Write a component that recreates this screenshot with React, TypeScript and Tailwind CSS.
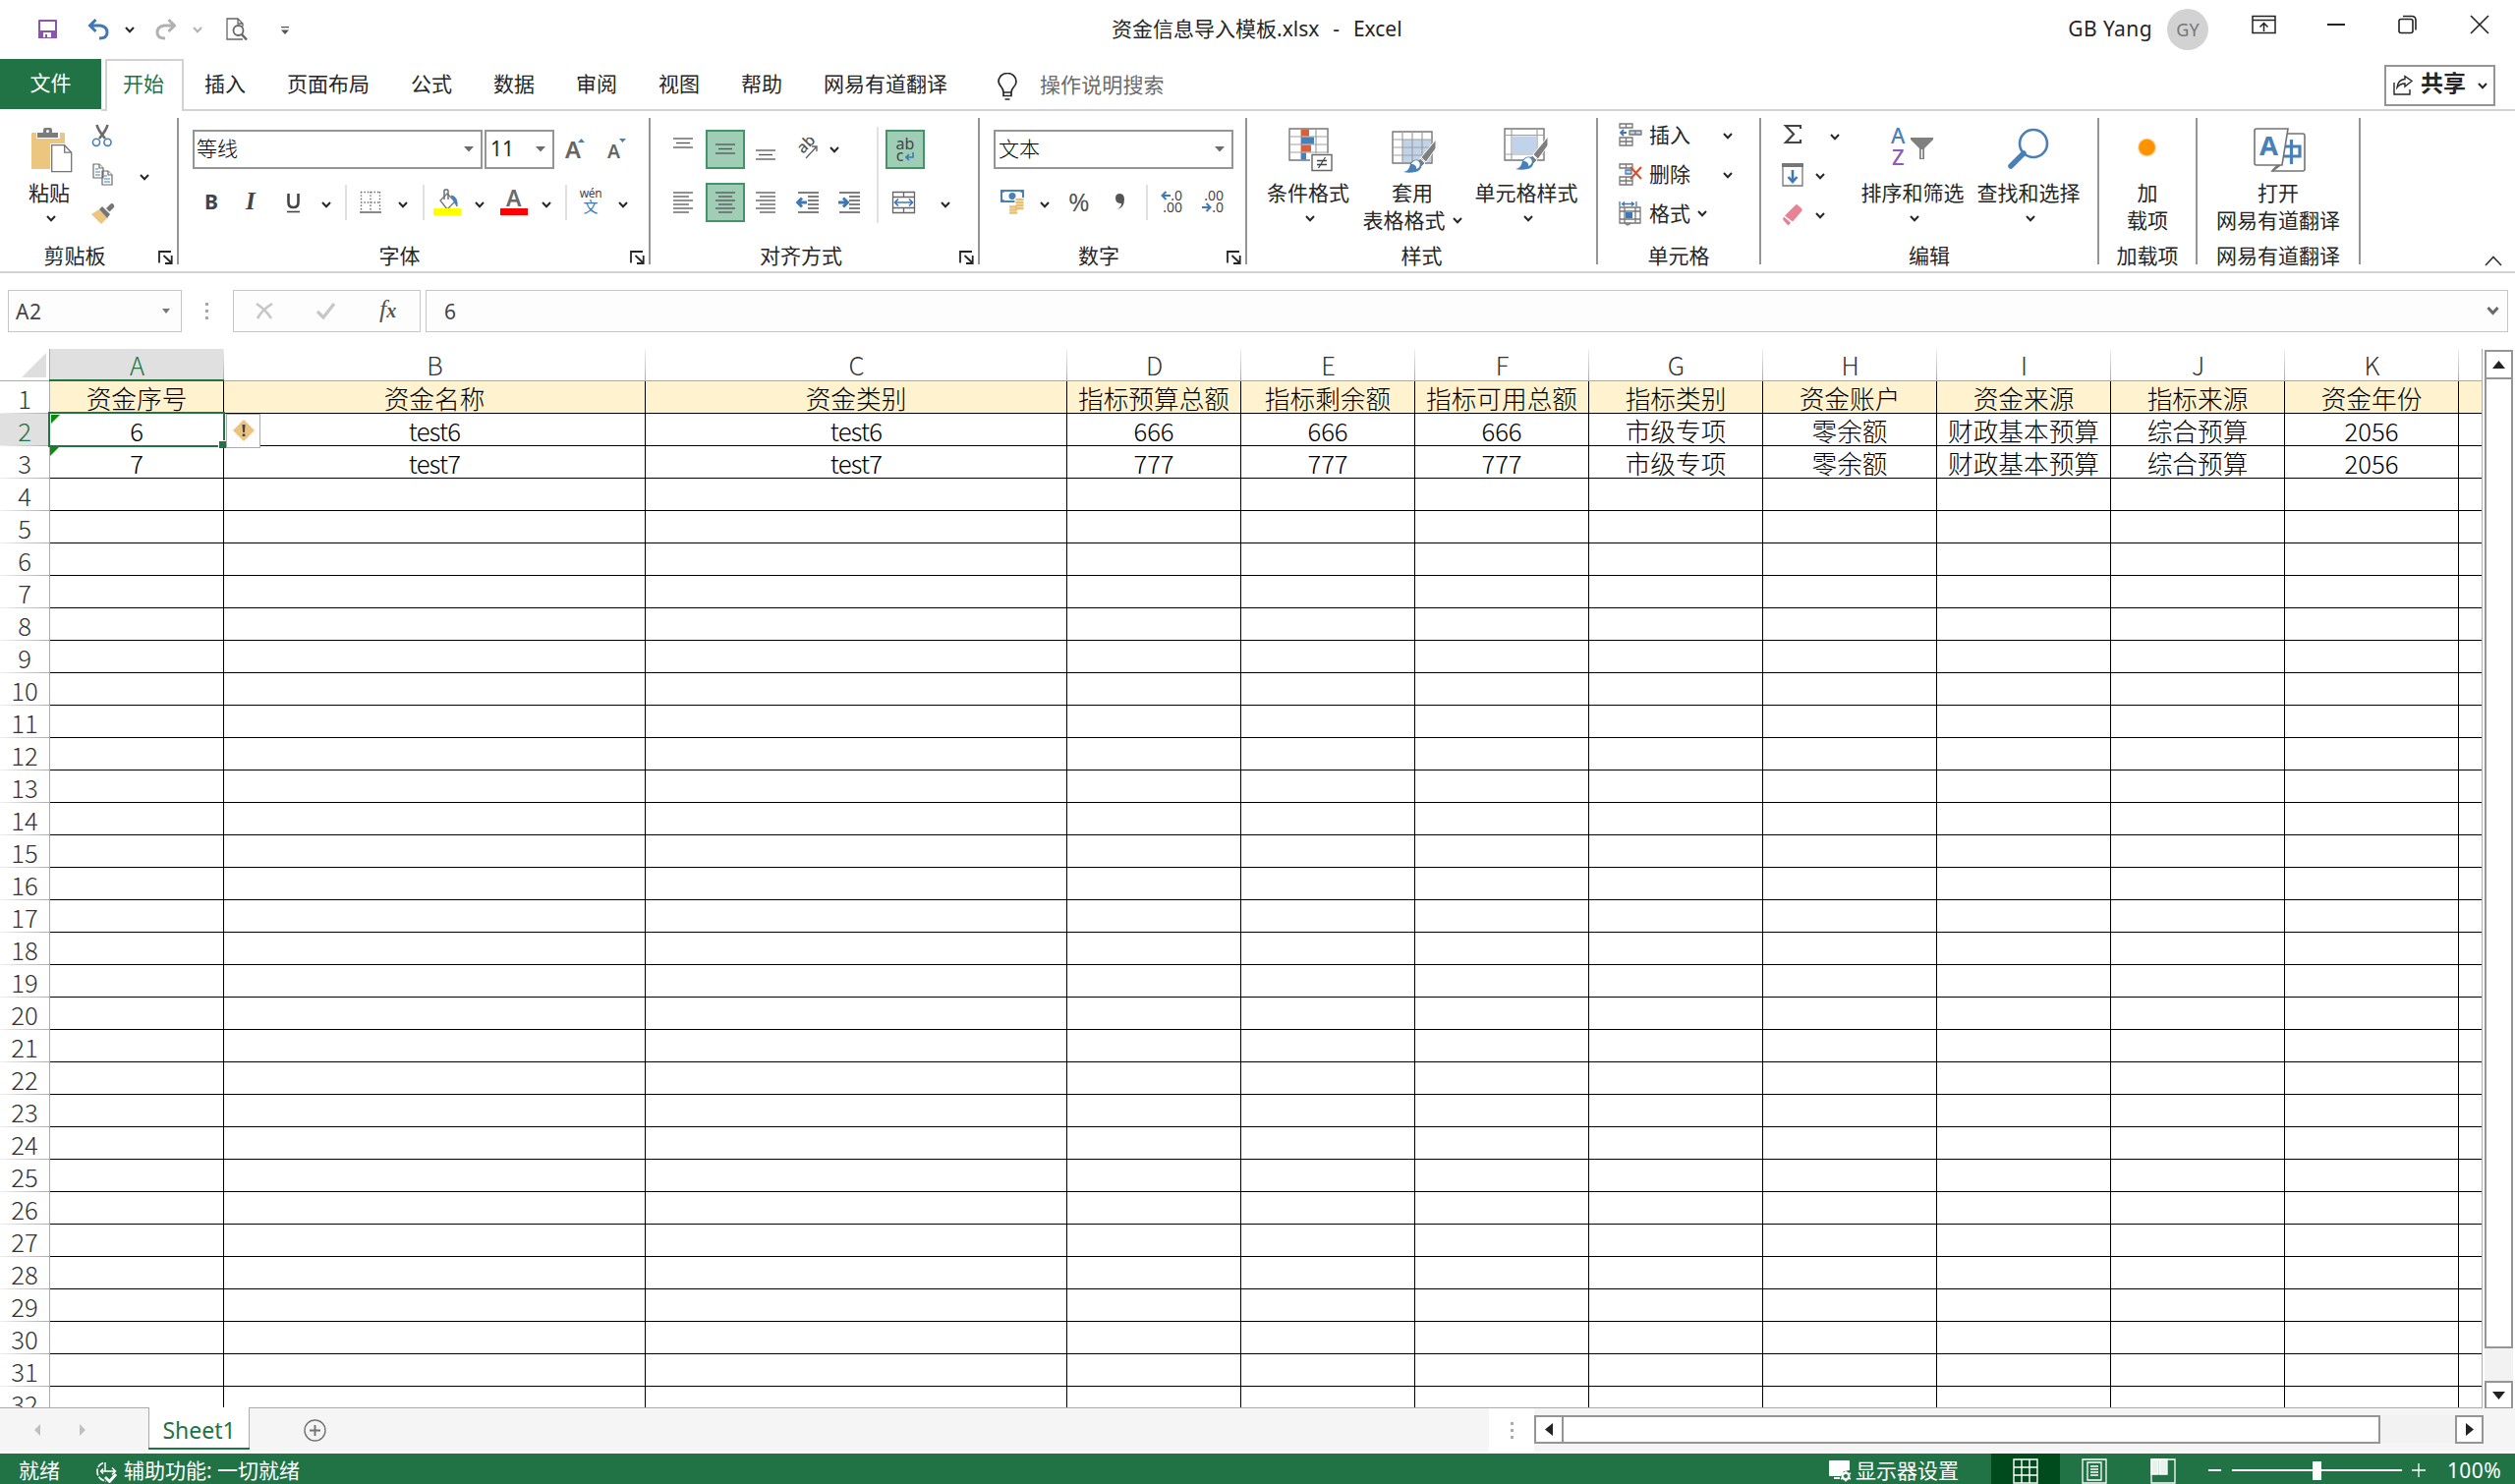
import React from "react";

const columns = [
  { name: "A", width: "w-[177px]" },
  { name: "B", width: "w-[429px]" },
  { name: "C", width: "w-[429px]" },
  { name: "D", width: "w-[177px]" },
  { name: "E", width: "w-[177px]" },
  { name: "F", width: "w-[177px]" },
  { name: "G", width: "w-[177px]" },
  { name: "H", width: "w-[177px]" },
  { name: "I", width: "w-[177px]" },
  { name: "J", width: "w-[177px]" },
  { name: "K", width: "w-[177px]" },
];

const data: string[][] = [
  ["资金序号", "资金名称", "资金类别", "指标预算总额", "指标剩余额", "指标可用总额", "指标类别", "资金账户", "资金来源", "指标来源", "资金年份"],
  ["6", "test6", "test6", "666", "666", "666", "市级专项", "零余额", "财政基本预算", "综合预算", "2056"],
  ["7", "test7", "test7", "777", "777", "777", "市级专项", "零余额", "财政基本预算", "综合预算", "2056"],
];

const rowNumbers = Array.from({ length: 32 }, (_, i) => i + 1);

const tabs = ["插入", "页面布局", "公式", "数据", "审阅", "视图", "帮助", "网易有道翻译"];

const Chevron = ({ className = "" }: { className?: string }) => (
  <svg className={`shrink-0 ${className}`} width="10" height="7" viewBox="0 0 10 7" fill="none">
    <path d="M1 1l4 4.2L9 1" stroke="currentColor" strokeWidth="2" />
  </svg>
);

const Triangle = ({ className = "" }: { className?: string }) => (
  <svg className={`shrink-0 ${className}`} width="10" height="6" viewBox="0 0 10 6">
    <path d="M0 0h10L5 5.5z" fill="#6b6b6b" />
  </svg>
);

const Launcher = () => (
  <svg className="absolute right-[4px] bottom-0" width="15" height="14" viewBox="0 0 15 14" fill="none" stroke="#262626" strokeWidth="1.8">
    <path d="M1 12.500V1h12M5.500 5l8 7.500M13.700 5v8H7" />
  </svg>
);

const Lines = ({ y, x, className = "" }: { y: number[]; x: number[][]; className?: string }) => (
  <svg className={`shrink-0 ${className}`} width="22" height="24" viewBox="0 0 22 24" stroke="#555" strokeWidth="1.3">
    {y.map((v, i) => (
      <path key={v} d={`M${x[i][0]} ${v}H${x[i][1]}`} />
    ))}
  </svg>
);

const Divider = ({ className = "" }: { className?: string }) => (
  <div className={`w-[2px] h-9 shrink-0 bg-[#e1e1e1] ${className}`}></div>
);

const Group = ({
  label,
  width,
  launcher,
  labelShift = "",
  children,
}: {
  label: string;
  width: string;
  launcher?: boolean;
  labelShift?: string;
  children: React.ReactNode;
}) => (
  <div className={`relative h-[149px] shrink-0 border-r-2 border-[#959595] flex flex-col ${width}`}>
    <div className="h-[126px] shrink-0 whitespace-nowrap">{children}</div>
    <div className={`h-[28px] shrink-0 leading-[28px] text-center whitespace-nowrap ${labelShift}`}>{label}</div>
    {launcher && <Launcher />}
  </div>
);

const BigButton = ({
  icon,
  lines,
  chevron,
  className = "",
}: {
  icon: React.ReactNode;
  lines: string[];
  chevron?: "below" | "inline";
  className?: string;
}) => (
  <div className={`flex flex-col items-center shrink-0 ${className}`}>
    <div className="h-[62px] pt-[10px]">{icon}</div>
    <div className="h-[28px] leading-[28px]">{lines[0]}</div>
    {chevron === "below" ? (
      <Chevron className="mt-[9px] ml-[4px]" />
    ) : (
      <div className="h-[28px] leading-[28px] flex items-center">
        {lines[1]}
        {chevron && <Chevron className="ml-[7px]" />}
      </div>
    )}
  </div>
);

const Brush = ({ x, y }: { x: number; y: number }) => (
  <g transform={`translate(${x} ${y})`}>
    <path d="M33 0v9L23 23l-5-5z" fill="#7f7f7f" stroke="#fff" strokeWidth="1" />
    <path d="M17 19l5 5-4 4-5-4z" fill="#7f7f7f" stroke="#fff" strokeWidth="1" />
    <path d="M0 33c5-1 6-4 7-8 1-4 7-6 10-3 3 4 1 10-5 11-4 1-8 1-12 0z" fill="#4a80b8" />
    <path d="M8 25c2-4 6-5 8-2s0 6-3 7c1-3-2-5-5-5z" fill="#fff" />
  </g>
);

const PasteIcon = () => (
  <svg className="ml-[6px]" width="42" height="47" viewBox="0 0 42 47">
    <path d="M1 5h32q1 0 1 1v36H1q-1 0-1-1V6q0-1 1-1z" fill="#ecc57e" />
    <path d="M5 4h24v7H5z" fill="#fff" />
    <path d="M6 5h6V2q0-2 2-2h5q2 0 2 2v3h6v5H6z" fill="#7c7c7c" />
    <circle cx="16.500" cy="3.500" r="1.500" fill="#fff" />
    <path d="M19 16h15l8 9v22H19z" fill="#fff" />
    <path d="M20.700 17.700h13l7 7.500v19.500h-20z" fill="#fff" stroke="#737373" strokeWidth="1.300" />
    <path d="M33.700 17.700v7.500h7" fill="none" stroke="#737373" strokeWidth="1.300" />
  </svg>
);

const Clipboard = () => (
  <Group label="剪贴板" width="w-[182px]" launcher labelShift="pr-[28px]">
    <div className="flex">
      <BigButton className="ml-[19px] w-[62px]" icon={<PasteIcon />} lines={["粘贴"]} chevron="below" />
      <div className="ml-[12px] flex flex-col">
        <svg className="mt-[6px]" width="22" height="24" viewBox="0 0 22 24" fill="none">
          <path d="M5.500 1q1 5 8.500 14M16.500 1q-1 5-8.500 14" stroke="#6b6b6b" strokeWidth="2.600" />
          <circle cx="5" cy="18.800" r="3.600" stroke="#4a80b8" strokeWidth="1.600" />
          <circle cx="16.500" cy="18.800" r="3.600" stroke="#4a80b8" strokeWidth="1.600" />
        </svg>
        <svg className="mt-[16px] ml-[1px]" width="22" height="24" viewBox="0 0 22 24" fill="#fff" stroke="#6b6b6b" strokeWidth="1.200">
          <path d="M1 1h6l4 4v10H1zM10 8h6l4 4v10H10z" />
          <path d="M7 1v4h4M16 8v4h4" />
          <path d="M3 6h3M3 9h5M3 12h5M12 13h3M12 16h6M12 19h6" stroke="#4a80b8" />
        </svg>
        <svg className="mt-[17px]" width="24" height="22" viewBox="0 0 24 22">
          <path d="M0 11l8-5 8 9-6 6z" fill="#ecc57e" />
          <path d="M8 6l3-3 8 8-3 4zM15 5l4-4q2-2 3.500 0t0 3.500l-4 4z" fill="#757575" />
        </svg>
      </div>
      <Chevron className="mt-[57px] ml-[25px]" />
    </div>
  </Group>
);

const FontGroup = () => (
  <Group label="字体" width="w-[480px]" launcher labelShift="pr-[29px]">
    <div className="flex pt-3 pl-[14px] h-[54px]">
      <div className="w-[295px] h-10 border-2 border-[#959595] flex items-center justify-between pl-[2px] pr-[7px]">
        <span className="-mt-[2px] font-light text-black">等线</span>
        <Triangle />
      </div>
      <div className="w-[71px] h-10 ml-[2px] border-2 border-[#959595] flex items-center justify-between pl-1 pr-[7px]">
        <span className="-mt-[2px]">11</span>
        <Triangle />
      </div>
      <svg className="ml-[11px] mt-[3px]" width="66" height="34" viewBox="0 -3 66 34">
        <text x="0" y="23" fontSize="24" fontWeight="600" fill="#666" fontFamily="Noto Sans" textLength="16" lengthAdjust="spacingAndGlyphs">A</text>
        <path d="M13 7l3.500-4L20 7zM55 3h7l-3.500 4z" fill="#4a80b8" />
        <text x="43" y="23" fontSize="19" fontWeight="600" fill="#666" fontFamily="Noto Sans" textLength="13" lengthAdjust="spacingAndGlyphs">A</text>
      </svg>
    </div>
    <div className="flex items-center h-9 mt-[14px] pl-[26px] text-[#444]">
      <span className="w-[15px] -mt-[3px] font-bold">B</span>
      <span className="w-[15px] ml-[27px] -mt-[2px] italic font-bold text-[25px] font-['Liberation_Serif']">I</span>
      <svg className="ml-[26px]" width="15" height="24" viewBox="0 0 15 24" fill="none" stroke="#444">
        <path d="M2.500 3v9q0 5 5 5t5-5V3" strokeWidth="2.600" />
        <path d="M1 21.500h13" strokeWidth="1.600" />
      </svg>
      <Chevron className="ml-[21px] mt-1 text-[#262626]" />
      <Divider className="ml-[14px]" />
      <svg className="ml-[13px]" width="22" height="24" viewBox="0 0 22 24" fill="none" stroke="#666" strokeWidth="1.400">
        <path d="M1 1.500h20M1 12h20M1.500 1v20M11 1v20M20.500 1v20" strokeDasharray="1.400 2" />
        <path d="M0 22h22" stroke="#555" />
      </svg>
      <Chevron className="ml-[17px] mt-1 text-[#262626]" />
      <Divider className="ml-[15px]" />
      <svg className="ml-[9px]" width="30" height="28" viewBox="0 0 30 28">
        <path d="M7 12L14 5l8 8-8 8z" fill="#fff" stroke="#777" strokeWidth="1.400" />
        <path d="M11 11V2q0-1 1-1h2q1 0 1 1v9" fill="none" stroke="#666" strokeWidth="1.400" />
        <path d="M18 7q7 1 6 11l-2-3z" fill="#4a80b8" stroke="#4a80b8" />
        <path d="M0 20h28v7H0z" fill="#ff0" />
      </svg>
      <Chevron className="ml-[12px] mt-1 text-[#262626]" />
      <svg className="ml-[16px] -mt-[6px]" width="28" height="34" viewBox="0 -6 28 34">
        <text x="6" y="18" fontSize="23" fontWeight="600" fill="#6b6b6b" fontFamily="Noto Sans" textLength="16">A</text>
        <path d="M0 20h28v7H0z" fill="red" />
      </svg>
      <Chevron className="ml-[14px] mt-1 text-[#262626]" />
      <Divider className="ml-[14px]" />
      <div className="ml-[11px] -mt-[3px] w-[26px] flex flex-col items-center">
        <span className="text-[12px] leading-[12px] tracking-tight">wén</span>
        <span className="text-[15px] leading-[15px] text-[#3f78b3]">文</span>
      </div>
      <Chevron className="ml-[15px] mt-1 text-[#262626]" />
    </div>
  </Group>
);

const full = [1, 21];
const mid = [4, 18];

const AlignGroup = () => (
  <Group label="对齐方式" width="w-[335px]" launcher labelShift="pr-[27px]">
    <div className="flex h-[126px]">
      <div className="w-[230px] pt-3">
        <div className="flex items-center h-10 pl-[22px]">
          <Lines y={[1, 5.5, 10]} x={[full, mid, full]} />
          <div className="ml-[12px] w-10 h-10 bg-[#9fcdb5] border-2 border-[#439467] flex items-center justify-center">
            <Lines y={[7, 11.5, 16]} x={[full, mid, full]} />
          </div>
          <Lines className="ml-[10px]" y={[13, 17.5, 22]} x={[full, mid, full]} />
          <svg className="ml-[21px]" width="24" height="24" viewBox="0 0 24 24">
            <text x="0" y="0" transform="translate(6 17) rotate(-45)" fontSize="16" fill="#555" fontFamily="Noto Sans" fontWeight="500">ab</text>
            <path d="M9 21L20 9M15 9h5v5" stroke="#666" strokeWidth="1.400" fill="none" />
          </svg>
          <Chevron className="ml-[9px] mt-[1px]" />
        </div>
        <div className="flex items-center h-10 mt-[14px] pl-[22px]">
          <Lines y={[2, 6, 10, 14, 18, 22]} x={[full, [1, 17], full, [1, 17], full, [1, 17]]} />
          <div className="ml-[12px] w-10 h-10 bg-[#9fcdb5] border-2 border-[#439467] flex items-center justify-center">
            <Lines y={[2, 6, 10, 14, 18, 22]} x={[full, mid, full, mid, full, mid]} />
          </div>
          <Lines className="ml-[10px]" y={[2, 6, 10, 14, 18, 22]} x={[full, [5, 21], full, [5, 21], full, [5, 21]]} />
          <svg className="ml-[20px]" width="24" height="24" viewBox="0 0 24 24" stroke="#555" strokeWidth="1.300">
            <path d="M2 2h21M12 6h11M12 10h11M12 14h11M12 18h11M2 22h21" />
            <path d="M11 12H3M6 7.500L1.500 12 6 16.500" stroke="#3f78b3" strokeWidth="3" fill="none" />
          </svg>
          <svg className="ml-[18px]" width="24" height="24" viewBox="0 0 24 24" stroke="#555" strokeWidth="1.300">
            <path d="M2 2h21M12 6h11M12 10h11M12 14h11M12 18h11M2 22h21" />
            <path d="M1 12h8M6 7.500l4.500 4.500L6 16.500" stroke="#3f78b3" strokeWidth="3" fill="none" />
          </svg>
        </div>
      </div>
      <div className="w-[2px] h-[98px] mt-[9px] bg-[#e1e1e1]"></div>
      <div className="pl-[7px] pt-3">
        <div className="w-10 h-10 bg-[#9fcdb5] border-2 border-[#439467] flex flex-col items-center text-[#444] text-[16px] leading-[12px]">
          <span className="mt-[6px]">ab</span>
          <span className="flex items-center">
            c
            <svg className="ml-[2px] mt-[2px]" width="9" height="9" viewBox="0 0 9 9" fill="none" stroke="#3f78b3" strokeWidth="1.600">
              <path d="M8 0v5H1M4 2L1 5l3 3" />
            </svg>
          </span>
        </div>
        <div className="flex items-center h-10 mt-[14px] pl-[6px]">
          <svg width="25" height="24" viewBox="0 0 25 24" fill="none" stroke="#666" strokeWidth="1.300">
            <path d="M1.500 1.500h22v21h-22zM1.500 6.500h22M1.500 17.500h22M12.500 1.500v5M12.500 17.500v5" />
            <path d="M4 12h17M7 8.500L3.500 12 7 15.500M18 8.500l3.500 3.500-3.500 3.500" stroke="#3f78b3" strokeWidth="1.700" />
          </svg>
          <Chevron className="ml-[25px] mt-1" />
        </div>
      </div>
    </div>
  </Group>
);

const NumberGroup = () => (
  <Group label="数字" width="w-[272px]" launcher labelShift="pr-[28px]">
    <div className="pt-3 pl-[14px]">
      <div className="w-[244px] h-10 border-2 border-[#959595] flex items-center justify-between pl-[3px] pr-[7px]">
        <span className="-mt-[2px] font-light text-black">文本</span>
        <Triangle />
      </div>
    </div>
    <div className="flex items-center h-9 mt-4 pl-[21px]">
      <svg className="-mt-[2px]" width="25" height="26" viewBox="0 0 25 26">
        <path d="M0 1h24v13H0z" fill="#4a80b8" />
        <path d="M2 4q2 0 2-1h16q0 1 2 1v7q-2 0-2 1H4q0-1-2-1z" fill="#fff" />
        <circle cx="12" cy="7.500" r="3.500" fill="#4a80b8" />
        <path d="M14.500 9h10v10h-10zM8 16h10v10H8z" fill="#fff" />
        <path d="M16.500 11h6M16.500 14h6M16.500 17h6M16.500 20h6M10 18.500h6M10 21.500h6M10 24.500h6" stroke="#e8bf73" strokeWidth="2.400" strokeLinecap="round" />
      </svg>
      <Chevron className="ml-[15px] mt-1" />
      <span className="ml-[19px] w-[22px] -mt-[3px] text-[26px] text-[#555] tracking-tight">%</span>
      <svg className="ml-[25px] -mt-[2px]" width="12" height="18" viewBox="0 0 12 18">
        <path d="M2 17q5-2 5-6Q1 11 1 5.500 1 1 5.500 1T10 7q0 9-8 10z" fill="#555" />
      </svg>
      <Divider className="ml-[20px]" />
      <div className="ml-[11px] -mt-[3px] w-[24px] flex flex-col items-end text-[14px] leading-[12px] text-[#444]">
        <span className="flex items-center">
          <svg width="10" height="10" viewBox="0 0 10 10" fill="none" stroke="#3f78b3" strokeWidth="2">
            <path d="M10 5H2M5.500 1l-4 4 4 4" />
          </svg>
          .0
        </span>
        <span>.00</span>
      </div>
      <div className="ml-[18px] -mt-[3px] w-[24px] flex flex-col items-end text-[14px] leading-[12px] text-[#444]">
        <span>.00</span>
        <span className="flex items-center">
          <svg width="10" height="10" viewBox="0 0 10 10" fill="none" stroke="#3f78b3" strokeWidth="2">
            <path d="M0 5h8M4.500 1l4 4-4 4" />
          </svg>
          .0
        </span>
      </div>
    </div>
  </Group>
);

const CondFormatIcon = () => (
  <svg className="ml-1" width="45" height="46" viewBox="0 0 45 46">
    <path d="M1 1h39v32H1z" fill="#fff" stroke="#777" strokeWidth="1.400" />
    <path d="M1 9h39M1 17h39M1 25h39M13 1v32M28 1v32" stroke="#a0a0a0" strokeWidth="1.200" />
    <path d="M13 1.500h8v7h-8zM13 17.500h10v7H13z" fill="#d9603b" />
    <path d="M13 9.500h13v7H13zM13 25.500h5v7h-5z" fill="#4a80b8" />
    <path d="M22 26h23v19H22z" fill="#fff" />
    <path d="M24 27.500h20v16H24z" fill="#fff" stroke="#666" strokeWidth="1.400" />
    <path d="M29 33.500h10M29 37.500h10M37.500 30l-7 11" stroke="#444" strokeWidth="1.300" />
  </svg>
);

const TableStyleIcon = () => (
  <svg className="ml-1" width="46" height="46" viewBox="0 0 46 46">
    <path d="M1 4h40v32H1z" fill="#fff" stroke="#777" strokeWidth="1.400" />
    <path d="M11 12h29v23H11z" fill="#c1d3e9" />
    <path d="M1 12h40M1 20h40M1 28h40M11 4v32M21 4v32M31 4v32" stroke="#a0a0a0" strokeWidth="1.200" />
    <Brush x={12} y={12} />
  </svg>
);

const CellStyleIcon = () => (
  <svg width="46" height="46" viewBox="0 0 46 46">
    <path d="M1 1h40v32H1z" fill="#fff" stroke="#777" strokeWidth="1.400" />
    <path d="M1 7.500h40M1 27h40M8 1v32M34 1v32" stroke="#a0a0a0" strokeWidth="1.200" />
    <path d="M8.500 8.500h25v18h-25z" fill="#c1d3e9" />
    <Brush x={12} y={9} />
  </svg>
);

const StyleGroup = () => (
  <Group label="样式" width="w-[357px]">
    <div className="flex">
      <BigButton className="ml-[18px] w-[88px]" icon={<CondFormatIcon />} lines={["条件格式"]} chevron="below" />
      <BigButton className="ml-[7px] w-[110px]" icon={<TableStyleIcon />} lines={["套用", "表格格式"]} chevron="inline" />
      <BigButton className="ml-[7px] w-[108px]" icon={<CellStyleIcon />} lines={["单元格样式"]} chevron="below" />
    </div>
  </Group>
);

const CellsGroup = () => (
  <Group label="单元格" width="w-[166px]">
    <div className="pl-[21px] -mt-[3px]">
      <div className="flex items-center h-10">
        <svg width="24" height="24" viewBox="0 0 24 24" fill="none" stroke="#777" strokeWidth="1.300">
          <path d="M1 1h13v4H1zM7.500 1v4M1 15h13v8H1zM7.500 15v8M1 19h13" />
          <path d="M11 8h12v4H11z" fill="#c1d3e9" />
          <path d="M17 8v4" />
          <path d="M8 10H2M5 7l-3 3 3 3" stroke="#3f78b3" strokeWidth="1.800" />
        </svg>
        <span className="ml-[7px]">插入</span>
        <Chevron className="ml-[33px] mt-[3px]" />
      </div>
      <div className="flex items-center h-10">
        <svg width="24" height="24" viewBox="0 0 24 24" fill="none" stroke="#777" strokeWidth="1.300">
          <path d="M1 2h13v4H1zM7.500 2v4M1 15h13v8H1zM7.500 15v8M1 19h13" />
          <path d="M7 8h6v4H7z" fill="#c1d3e9" stroke="#4a80b8" />
          <path d="M12 5l11 12M23 5L12 17" stroke="#d9512c" strokeWidth="2.200" />
        </svg>
        <span className="ml-[7px]">删除</span>
        <Chevron className="ml-[33px] mt-[3px]" />
      </div>
      <div className="flex items-center h-10">
        <svg width="24" height="26" viewBox="0 0 24 26" fill="none" stroke="#777" strokeWidth="1.300">
          <path d="M1 7h21v16H1zM1 11h21M1 19h21M6 7v16M17 7v16M6 23l3 2 4-2" />
          <path d="M7 12h7v6H7z" fill="#3f78b3" stroke="none" />
          <path d="M1 1v5M18 1v5M4 3.500h11M6 1.500l-2.500 2L6 5.500M13 1.500l2.500 2-2.500 2" stroke="#3f78b3" />
        </svg>
        <span className="ml-[7px]">格式</span>
        <Chevron className="ml-[7px] mt-[1px]" />
      </div>
    </div>
  </Group>
);

const SortIcon = () => (
  <svg className="-mt-[6px]" width="44" height="52" viewBox="0 -6 44 52">
    <text x="0" y="16" fontSize="22" fontWeight="500" fill="#4a80b8" fontFamily="Noto Sans">A</text>
    <text x="1" y="38" fontSize="22" fontWeight="500" fill="#8f5bb5" fontFamily="Noto Sans">Z</text>
    <path d="M20 10h23v2l-9 9v11h-5V21l-9-9z" fill="#7f7f7f" />
    <path d="M31.500 22v9" stroke="#fff" strokeWidth="1.500" />
  </svg>
);

const EditGroup = () => (
  <Group label="编辑" width="w-[344px]">
    <div className="flex">
      <div className="w-[90px] pl-[21px] -mt-[2px]">
        <div className="flex items-center h-10">
          <svg className="-mt-[2px]" width="22" height="24" viewBox="0 0 22 24" fill="none" stroke="#444" strokeWidth="2.200">
            <path d="M19 6V3H4l8 8.500L4 20h15v-3" />
          </svg>
          <Chevron className="ml-[27px] mt-[2px]" />
        </div>
        <div className="flex items-center h-10">
          <svg width="22" height="24" viewBox="0 0 22 24">
            <path d="M1 1h20v22H1z" fill="#fff" stroke="#777" strokeWidth="1.300" />
            <path d="M0 0h22v4H0z" fill="#777" />
            <path d="M11 7v12M6.500 14l4.500 5 4.500-5" stroke="#3f78b3" strokeWidth="2.600" fill="none" />
          </svg>
          <Chevron className="ml-[12px] mt-[3px]" />
        </div>
        <div className="flex items-center h-10">
          <svg width="22" height="24" viewBox="0 0 22 24" fill="#e88295">
            <path d="M14 2.500q1-1 2 0l4 3.500q1 1 .5 2.500l-9.500 11-8-6z" />
            <path d="M2 14.500l7 6-1.500 2q-1 1-2 0L1.500 18q-1-1 0-2z" />
          </svg>
          <Chevron className="ml-[12px] mt-[3px]" />
        </div>
      </div>
      <BigButton className="ml-[10px] w-[108px]" icon={<SortIcon />} lines={["排序和筛选"]} chevron="below" />
      <BigButton
        className="ml-[10px] w-[108px]"
        icon={
          <svg width="42" height="46" viewBox="0 0 42 46" fill="none" stroke="#4a80b8">
            <circle cx="26" cy="16" r="14" strokeWidth="2.600" />
            <path d="M16 26L3 39" strokeWidth="5.500" strokeLinecap="round" />
          </svg>
        }
        lines={["查找和选择"]}
        chevron="below"
      />
    </div>
  </Group>
);

const TranslateIcon = () => (
  <svg className="ml-[3px]" width="54" height="46" viewBox="0 0 54 46" stroke="#737373" strokeWidth="1.600" fill="#fff">
    <path d="M29 6h21q2 0 2 2v34q0 2-2 2H19l8-9z" />
    <path d="M3 1h32l-6 37H3q-2 0-2-2V3q0-2 2-2z" />
    <path d="M19 44l8-6" />
    <text x="6" y="28" fontSize="27" fontWeight="bold" fill="#4a80b8" stroke="none" fontFamily="Noto Sans" textLength="19" lengthAdjust="spacingAndGlyphs">A</text>
    <path d="M32 19h15v10H31M38.500 12v25" stroke="#4a80b8" strokeWidth="3.200" fill="none" />
  </svg>
);

const Ribbon = () => (
  <div className="h-[165px] border-b-2 border-[#d2d2d2] pt-[7px] flex relative">
    <Clipboard />
    <FontGroup />
    <AlignGroup />
    <NumberGroup />
    <StyleGroup />
    <CellsGroup />
    <EditGroup />
    <Group label="加载项" width="w-[100px]">
      <BigButton
        icon={
          <svg width="24" height="46" viewBox="0 0 24 46">
            <circle cx="11.500" cy="20" r="9.500" fill="#ffd9a6" />
            <circle cx="11.500" cy="20" r="8.300" fill="#ff9200" />
          </svg>
        }
        lines={["加", "载项"]}
      />
    </Group>
    <Group label="网易有道翻译" width="w-[166px]">
      <BigButton icon={<TranslateIcon />} lines={["打开", "网易有道翻译"]} />
    </Group>
    <svg className="ml-[126px] mt-[140px]" width="18" height="11" viewBox="0 0 18 11" fill="none" stroke="#333" strokeWidth="1.600">
      <path d="M1 10l8-8.500L17 10" />
    </svg>
  </div>
);

const TitleBar = () => (
  <div className="h-[60px] flex items-center">
    <div className="flex items-center w-[1131px] pl-[39px]">
      <svg width="20" height="20" viewBox="0 0 20 20">
        <path d="M1 0h17q1 0 1 1v18H0V1q0-1 1-1z" fill="#8a56ad" />
        <path d="M2 2h15v9H2z" fill="#fff" />
        <path d="M5 13h8v5H5z" fill="#fff" />
        <path d="M7 15h2v4H7z" fill="#8a56ad" />
      </svg>
      <svg className="ml-[30px]" width="22" height="22" viewBox="0 0 22 22" fill="none" stroke="#3f78b3" strokeWidth="3">
        <path d="M2 7h11q7 1 7 7t-8 6M8.500 1L2.500 7l6 6" />
      </svg>
      <Chevron className="ml-[16px]" />
      <svg className="ml-[21px]" width="22" height="22" viewBox="0 0 22 22" fill="none" stroke="#b1b1b1" strokeWidth="3">
        <path d="M20 7H9q-7 1-7 7t8 6M13.500 1l6 6-6 6" />
      </svg>
      <Chevron className="ml-[16px] text-[#b1b1b1]" />
      <svg className="ml-[24px]" width="23" height="24" viewBox="0 0 23 24" fill="none" stroke="#666" strokeWidth="1.300">
        <path d="M17 22H1V1h11l5 5v3M12 1v5h5" />
        <circle cx="12.500" cy="13" r="5" strokeWidth="1.800" />
        <path d="M16 17l5 5.500" strokeWidth="2.600" />
      </svg>
      <svg className="ml-[33px] mt-[2px]" width="8" height="8" viewBox="0 0 8 8" fill="#555">
        <path d="M0 0h8v1.300H0zM0 3.500h8L4 8z" />
      </svg>
    </div>
    <div className="whitespace-pre -mt-[2px] [word-spacing:1.5px]">资金信息导入模板.xlsx  -  Excel</div>
    <div className="ml-auto flex items-center">
      <span className="-mt-[2px] tracking-[0.4px]">GB Yang</span>
      <div className="ml-[15px] w-[42px] h-[42px] rounded-full bg-[#d2d2d2] text-[#777] text-[18px] flex items-center justify-center">GY</div>
      <div className="flex items-center h-[60px] pb-[10px] ml-[44px] mr-[26px]">
        <svg width="25" height="20" viewBox="0 0 25 20" fill="none" stroke="#222" strokeWidth="1.500">
          <path d="M1 1.500h23v17H1zM1 5.500h23M12.500 17V9M8.500 12.500l4-4 4 4" />
        </svg>
        <div className="ml-[52px] -mt-[1px] w-[18px] h-[2px] bg-[#222]"></div>
        <svg className="ml-[54px]" width="20" height="20" viewBox="0 0 20 20" fill="none" stroke="#222" strokeWidth="1.600">
          <rect x="1" y="4.500" width="14" height="14" rx="2" />
          <path d="M5 1.500h9q4 0 4 4v10" />
        </svg>
        <svg className="ml-[53px]" width="20" height="20" viewBox="0 0 20 20" fill="none" stroke="#222" strokeWidth="1.600">
          <path d="M1 1l18 18M19 1L1 19" />
        </svg>
      </div>
    </div>
  </div>
);

const TabBar = () => (
  <div className="h-[53px] flex relative">
    <div className="w-[103px] h-[51px] pb-[4px] bg-[#217346] text-white flex items-center justify-center">文件</div>
    <div className="w-1 border-b-2 border-[#d2d2d2]"></div>
    <div className="w-[80px] pb-[5px] pr-[2px] border-2 border-b-0 border-[#d2d2d2] text-[#217346] flex items-center justify-center">开始</div>
    <div className="grow flex items-center border-b-2 border-[#d2d2d2]">
      {tabs.map((tab) => (
        <div key={tab} className="px-[21px] -mt-[1px]">
          {tab}
        </div>
      ))}
      <svg className="ml-[30px] mt-1" width="20" height="28" viewBox="0 0 20 28" fill="none" stroke="#262626" strokeWidth="1.700">
        <path d="M6 20q0-3-2.500-6A9 9 0 0 1 1 9a9 8.500 0 0 1 18 0q0 3-2.500 5.500T14 20zM6 23.500h8V20H6zM7.500 27h5" />
      </svg>
      <div className="ml-[23px] text-[#6b6b6b] tracking-[0.1px]">操作说明搜索</div>
      <div className="ml-auto mr-[20px] mt-[2px] w-[113px] h-[42px] border-2 border-[#959595] flex items-center pl-[7px]">
        <svg width="20" height="21" viewBox="0 0 20 21" fill="none" stroke="#262626" strokeWidth="1.400">
          <path d="M1 8v12h16v-5" />
          <path d="M12 1.500l7 5-7 5.500V9q-5 0-8 4 1-8 8-8.500z" />
        </svg>
        <span className="ml-2 -mt-[5px] font-bold text-[23px]">共享</span>
        <Chevron className="ml-[12px] mt-[1px]" />
      </div>
    </div>
  </div>
);

const FormulaBar = () => (
  <div className="h-[77px] pt-[17px] pl-2 pr-[7px] flex text-[#444]">
    <div className="w-[177px] h-[43px] border border-[#c6c6c6] bg-[#fdfdfd] flex items-center justify-between pl-[7px] pr-[11px]">
      <span className="tracking-[0.6px]">A2</span>
      <svg width="8" height="5" viewBox="0 0 8 5">
        <path d="M0 0h8L4 5z" fill="#777" />
      </svg>
    </div>
    <div className="ml-[24px] mt-[13px] flex flex-col gap-1">
      <i className="w-[3px] h-[3px] bg-[#a6a6a6]"></i>
      <i className="w-[3px] h-[3px] bg-[#a6a6a6]"></i>
      <i className="w-[3px] h-[3px] bg-[#a6a6a6]"></i>
    </div>
    <div className="ml-[25px] w-[191px] h-[43px] border border-[#c6c6c6] bg-[#fdfdfd] flex items-center">
      <svg className="ml-[22px]" width="18" height="17" viewBox="0 0 18 17" fill="none" stroke="#c6c6c6" strokeWidth="2.600">
        <path d="M1 1q9 6 15 15M17 1Q7 7 2 16" />
      </svg>
      <svg className="ml-[44px]" width="20" height="17" viewBox="0 0 20 17" fill="none" stroke="#c6c6c6" strokeWidth="3.200">
        <path d="M1 9l6 6L18 1" />
      </svg>
      <span className="ml-[44px] italic text-[26px] text-[#555] font-['Liberation_Serif'] pb-[3px]">
        f<span className="text-[20px] font-bold">x</span>
      </span>
    </div>
    <div className="ml-[5px] grow h-[43px] border border-[#c6c6c6] bg-[#fdfdfd] flex items-center justify-between pl-[18px] pr-[8px]">
      6
      <svg width="13" height="9" viewBox="0 0 13 9" fill="none" stroke="#6b6b6b" strokeWidth="3">
        <path d="M1.500 1l5 5.500 5-5.500" />
      </svg>
    </div>
  </div>
);

const ErrorMark = ({ className = "" }: { className?: string }) => (
  <svg className={`absolute ${className}`} width="9" height="9" viewBox="0 0 9 9">
    <path d="M0 0h9L0 9z" fill="#0c8a0c" />
  </svg>
);

const Sheet = () => (
  <div className="relative w-[2526px] h-[1078px] overflow-hidden border-b border-r border-[#ababab] text-[25.67px] font-light font-['Noto_Sans_CJK_SC',sans-serif] text-black">
    <div className="flex h-[33px] w-[2560px] border-b border-[#ababab] text-[#333]">
      <div className="w-[51px] h-full flex justify-end items-end pr-[4px] pb-[3px]">
        <svg width="25" height="25" viewBox="0 0 25 25">
          <path d="M25 0v25H0z" fill="#dedede" />
        </svg>
      </div>
      {columns.map((col) => (
        <div
          key={col.name}
          className={`${col.width} h-full flex items-center justify-center bg-linear-to-b from-[#f0f0f0] to-[#ababab] bg-[length:1px_100%] bg-right bg-no-repeat ${
            col.name === "A" ? "bg-[#e0e0e0] text-[#217346] shadow-[-1px_0_0_#ababab]" : ""
          }`}
        >
          {col.name}
        </div>
      ))}
    </div>
    {rowNumbers.map((n, r) => (
      <div key={n} className="flex h-[33px] w-[2560px]">
        <div
          className={`w-[51px] h-full border-r border-[#ababab] flex items-center justify-center bg-linear-to-r from-[#f0f0f0] to-[#ababab] bg-[length:100%_1px] bg-bottom bg-no-repeat ${
            n === 2 ? "bg-[#e0e0e0] text-[#217346]" : "text-[#333]"
          }`}
        >
          {n}
        </div>
        {columns.map((col, c) => (
          <div
            key={col.name}
            className={`${col.width} h-full border-r border-b border-black flex items-center justify-center whitespace-nowrap pt-[1px] ${
              n === 1 ? "bg-[#fff2cf]" : ""
            } ${r > 0 && (c === 1 || c === 2) ? "tracking-[-0.8px]" : ""}`}
          >
            {data[r]?.[c]}
          </div>
        ))}
        <div className={`w-[24px] h-full border-b border-black ${n === 1 ? "bg-[#fff2cf]" : ""}`}></div>
      </div>
    ))}
    <div className="absolute left-[50px] top-[31px] w-[178px] h-[2px] bg-[#217346]"></div>
    {/* active cell and its error button */}
    <div className="absolute left-[49px] top-[64px] w-[180px] h-[36px] border-2 border-[#217346]"></div>
    <ErrorMark className="left-[52px] top-[67px]" />
    <ErrorMark className="left-[51px] top-[100px]" />
    <div className="absolute left-[222px] top-[93px] w-[8px] h-[8px] bg-[#217346] border-l border-t border-white"></div>
    <div className="absolute left-[230px] top-[66px] w-[35px] h-[35px] bg-[#fdfdfd] border border-[#ababab] flex items-center justify-center">
      <svg className="-mt-[2px]" width="22" height="22" viewBox="0 0 22 22">
        <path d="M11 0l11 11-11 11L0 11z" fill="#eac282" />
        <path d="M9.500 5h3l-.6 8h-1.800zM9.700 14.500h2.600V17H9.700z" fill="#444" />
      </svg>
    </div>
  </div>
);

const VerticalScroll = () => (
  <div className="ml-[2px] mt-[1px] w-[29px] h-[1078px] bg-[#f2f2f2] flex flex-col">
    <div className="h-[30px] bg-white border-2 border-[#959595] flex items-center justify-center">
      <svg width="13" height="8" viewBox="0 0 13 8">
        <path d="M0 8h13L6.500 0z" fill="#222" />
      </svg>
    </div>
    <div className="h-[986px] bg-white border-2 border-t-0 border-[#959595]"></div>
    <div className="mt-auto h-[29px] bg-white border-2 border-[#959595] flex items-center justify-center">
      <svg width="13" height="8" viewBox="0 0 13 8">
        <path d="M0 0h13L6.500 8z" fill="#222" />
      </svg>
    </div>
  </div>
);

const SheetTabs = () => (
  <div className="h-[46px] pb-[2px]">
    <div className="h-[44px] bg-[#f5f5f5] flex relative">
      <svg className="mt-[16px] ml-[34px]" width="54" height="12" viewBox="0 0 54 12" fill="#c0c0c0">
        <path d="M7 0v12L1 6zM47 0v12l6-6z" />
      </svg>
      <div className="ml-[63px] -mt-[1px] w-[103px] h-[43px] bg-white border-x border-[#ababab] relative flex items-center justify-center text-[#217346] text-[23px]">
        <span className="mt-[2px]">Sheet1</span>
        <div className="absolute -left-px -right-px bottom-0 h-[2px] bg-[#217346]"></div>
      </div>
      <svg className="ml-[55px] mt-[11px]" width="23" height="23" viewBox="0 0 23 23" fill="none" stroke="#737373">
        <circle cx="11.500" cy="11.500" r="10.500" strokeWidth="1.400" />
        <path d="M6 11.500h11M11.500 6v11" strokeWidth="1.900" />
      </svg>
      <div className="ml-[1183px] w-[46px] bg-white flex flex-col items-center justify-center gap-1">
        <i className="w-[3px] h-[3px] bg-[#ababab]"></i>
        <i className="w-[3px] h-[3px] bg-[#ababab]"></i>
        <i className="w-[3px] h-[3px] bg-[#ababab]"></i>
      </div>
      <div className="mt-[7px] h-[29px] w-[966px] bg-[#f2f2f2] flex">
        <div className="w-[30px] border-2 border-[#959595] bg-white flex items-center justify-center">
          <svg width="8" height="13" viewBox="0 0 8 13">
            <path d="M8 0v13L0 6.500z" fill="#222" />
          </svg>
        </div>
        <div className="w-[831px] border-2 border-l-0 border-[#959595] bg-white"></div>
        <div className="ml-auto w-[29px] border-2 border-[#959595] bg-white flex items-center justify-center">
          <svg width="8" height="13" viewBox="0 0 8 13">
            <path d="M0 0v13l8-6.500z" fill="#222" />
          </svg>
        </div>
      </div>
    </div>
  </div>
);

const StatusBar = () => (
  <div className="h-[31px] bg-[#217346] text-white flex items-center overflow-hidden">
    <span className="ml-[19px] mt-[3px]">就绪</span>
    <svg className="ml-[37px] mt-[6px]" width="22" height="22" viewBox="0 0 22 22" fill="none" stroke="#fff" strokeWidth="1.600">
      <path d="M7 1.500Q1 4 1 10q0 8 9 10.500" strokeDasharray="7 1.500" />
      <path d="M9 1v9M4 10h15M16 6.500l3.500 3.500-3.500 3.500M7 7.500L4.500 10 7 12.500" strokeWidth="1.400" />
      <path d="M9 16l4.500 4.500L20 13" strokeWidth="2.800" />
    </svg>
    <span className="ml-[6px] mt-[3px]">辅助功能: 一切就绪</span>
    <div className="ml-auto flex items-center h-full">
      <svg className="mt-[5px]" width="24" height="22" viewBox="0 0 24 22">
        <path d="M1 0h19q1 0 1 1v9l-6 1-3 5H1q-1 0-1-1V1q0-1 1-1zM5 17h6v2H5z" fill="#fff" />
        <circle cx="17" cy="16" r="3.500" fill="none" stroke="#fff" strokeWidth="2" />
        <path d="M17 10.500v11M12 13l10 6M22 13l-10 6" stroke="#fff" strokeWidth="1.500" />
        <circle cx="17" cy="16" r="2" fill="#217346" />
      </svg>
      <span className="ml-[3px] mt-[3px]">显示器设置</span>
      <div className="ml-[33px] w-[70px] h-full bg-[#004b1c] flex justify-center pt-[5px]">
        <svg width="26" height="26" viewBox="0 0 26 26" fill="none" stroke="#fff" strokeWidth="1.400">
          <path d="M1 1h24v24H1zM1 9h24M1 17h24M9 1v24M17 1v24" />
        </svg>
      </div>
      <svg className="ml-[22px] mt-[5px]" width="26" height="26" viewBox="0 0 26 26" fill="none" stroke="#fff" strokeWidth="1.300">
        <path d="M1 1h24v24H1zM6 4h14v18H6zM9 8h8M9 11h8M9 14h8M9 17h8" />
      </svg>
      <svg className="ml-[44px] mt-[5px]" width="26" height="26" viewBox="0 0 26 26" fill="none" stroke="#fff" strokeWidth="1.300">
        <path d="M1 1h24v24H1z" />
        <path d="M1 1h7v15H1zM9.500 1H17v15H9.500z" fill="#e8f1ec" />
      </svg>
      <div className="ml-[33px] w-[13px] h-[1.500px] mt-[3px] bg-white"></div>
      <div className="ml-[11px] mt-[3px] w-[173px] h-[19px] flex items-center relative">
        <div className="w-full h-[2px] bg-white"></div>
        <div className="absolute left-[82px] w-[9px] h-[19px] bg-white"></div>
      </div>
      <svg className="ml-[10px] mt-[3px]" width="14" height="14" viewBox="0 0 14 14" stroke="#fff" strokeWidth="1.300">
        <path d="M0 7h14M7 0v14" />
      </svg>
      <span className="ml-[22px] mr-[14px] mt-[3px] tracking-[0.4px]">100%</span>
    </div>
  </div>
);

export default function App() {
  return (
    <div className="w-[2559px] h-[1510px] bg-white overflow-hidden flex flex-col text-[21px] leading-[28px] text-[#262626] font-['Noto_Sans','Noto_Sans_CJK_SC',sans-serif]">
      <TitleBar />
      <TabBar />
      <Ribbon />
      <FormulaBar />
      <div className="flex h-[1078px] shrink-0">
        <Sheet />
        <VerticalScroll />
      </div>
      <SheetTabs />
      <StatusBar />
    </div>
  );
}
